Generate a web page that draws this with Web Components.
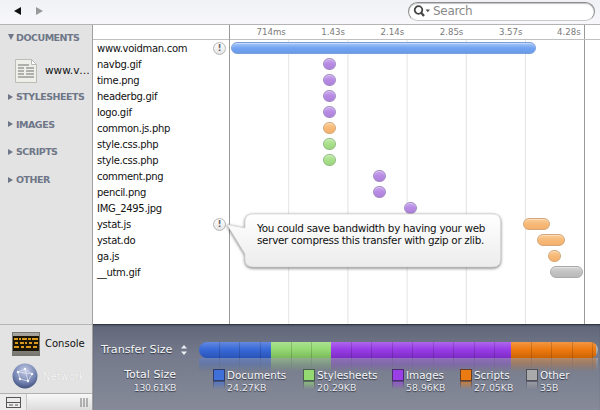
<!DOCTYPE html>
<html>
<head>
<meta charset="utf-8">
<title>Network</title>
<style>
html, body { margin: 0; padding: 0; height: 410px; overflow: hidden; background: #fff; font-family: "DejaVu Sans", sans-serif; }
</style>
</head>
<body>
<net-app></net-app>

<script>
// toolbar
class NetToolbar extends HTMLElement {
    constructor() {
        super();
        this.attachShadow({ mode: 'open' });
        this.shadowRoot.innerHTML = `
            <style>
                :host {
                    display: flex;
                    align-items: center;
                    height: 25px;
                    padding: 0 5px 0 14px;
                    box-sizing: border-box;
                    background: linear-gradient(#f0f1f5, #f8f8fb);
                    border-bottom: 1px solid #b4b4b4;
                }
                .arrow { width: 0; height: 0; border-top: 4px solid transparent; border-bottom: 4px solid transparent; }
                .back { border-right: 7px solid #111; margin-right: 15px; margin-bottom: 2px; }
                .next { border-left: 7px solid #999; margin-bottom: 2px; }
                .search {
                    margin-left: auto;
                    width: 187px;
                    height: 19px;
                    box-sizing: border-box;
                    margin-bottom: 2px;
                    border-radius: 10px;
                    border: 1px solid #8d8d8d;
                    border-bottom-color: #c9c9c9;
                    box-shadow: inset 0 1px 1px rgba(0,0,0,.25);
                    background: #fff;
                    display: flex;
                    align-items: center;
                    padding-left: 4px;
                    gap: 2px;
                    color: #8a8a8a;
                    font: 12px "DejaVu Sans", sans-serif;
                    letter-spacing: -.3px;
                }
                svg { display: block; }
            </style>
            <span class="arrow back"></span>
            <span class="arrow next"></span>
            <div class="search">
                <svg width="18" height="12" viewBox="0 0 18 12">
                    <circle cx="5.5" cy="5" r="3.8" fill="none" stroke="#444" stroke-width="1.8"/>
                    <path d="M8.2 7.8L11 11" stroke="#444" stroke-width="2.2"/>
                    <path d="M12.5 4.5h4.5l-2.2 2.8z" fill="#555"/>
                </svg>
                <span>Search</span>
            </div>
        `;
    }
}
customElements.define('net-toolbar', NetToolbar);

// sidebar group heading
class NetGroup extends HTMLElement {
    constructor() {
        super();
        this.attachShadow({ mode: 'open' });
        this.shadowRoot.innerHTML = `
            <style>
                :host {
                    display: flex;
                    align-items: center;
                    height: 14px;
                    padding-left: 8px;
                    gap: 3px;
                    color: #6e7688;
                    font: bold 9.5px "DejaVu Sans", sans-serif;
                    letter-spacing: -.5px;
                }
                .tri { width: 0; height: 0; border-top: 3px solid transparent; border-bottom: 3px solid transparent; border-left: 5px solid #6e7688; }
                :host([open]) .tri { border-left: 3.5px solid transparent; border-right: 3.5px solid transparent; border-top: 6px solid #6e7688; border-bottom: 0; margin-right: -1px; }
            </style>
            <span class="tri"></span><slot></slot>
        `;
    }
}
customElements.define('net-group', NetGroup);

// sidebar
class NetSidebar extends HTMLElement {
    constructor() {
        super();
        this.attachShadow({ mode: 'open' });
        this.shadowRoot.innerHTML = `
            <style>
                :host {
                    display: flex;
                    flex-direction: column;
                    background: #e3e3e3;
                    border-right: 1px solid #a0a0a0;
                    height: 385px;
                    box-sizing: border-box;
                    font: 10px "DejaVu Sans", sans-serif;
                    color: #111;
                }
                .groups { height: 299px; box-sizing: border-box; padding-top: 5px; }
                net-group { margin-bottom: 13.67px; }
                .doc { display: flex; align-items: center; height: 27px; margin: -1px 0 6px 15px; gap: 8px; font-size: 10.5px; }
                .tools { height: 69px; border-top: 1px solid #b6b6b6; box-sizing: border-box; padding-top: 6px; }
                .tool { display: flex; align-items: center; height: 30px; padding-left: 12px; gap: 5px; font-size: 10px; }
                .tool:first-child { height: 25px; margin-bottom: 5px; }
                .tool.on { color: #f6f6f6; text-shadow: 0 0 1px #bbb; }
                .foot { display: flex; height: 17px; border-top: 1px solid #b0b0b0; box-sizing: border-box; }
                .dock { width: 26px; display: flex; align-items: center; justify-content: center; border-right: 1px solid #c8c8c8; background: #ececec; }
                .grip { flex: 1; display: flex; justify-content: flex-end; align-items: center; padding-right: 4px; background: linear-gradient(#f8f8f8, #dcdcdc); }
                svg { display: block; flex: none; }
            </style>
            <div class="groups">
                <net-group open>DOCUMENTS</net-group>
                <div class="doc">
                    <svg width="22" height="27" viewBox="0 0 22 27">
                        <path d="M.5 2.5h16l5 5v18h-21z" fill="#efefea" stroke="#bdbdb8"/>
                        <path d="M16.5 2.5v5h5z" fill="#fff" stroke="#b8b8b8"/>
                        <path d="M3 8h11M3 11h6M11 11h8M3 14h6M11 14h8M3 17h6M11 17h8M3 20h16" stroke="#9a9a96" stroke-width="1.4"/>
                    </svg>
                    <span>www.v…</span>
                </div>
                <net-group>STYLESHEETS</net-group>
                <net-group>IMAGES</net-group>
                <net-group>SCRIPTS</net-group>
                <net-group>OTHER</net-group>
            </div>
            <div class="tools">
                <div class="tool">
                    <svg width="28" height="24" viewBox="0 0 28 24">
                        <defs>
                            <linearGradient id="c" x1="0" y1="0" x2="0" y2="1">
                                <stop offset="0" stop-color="#a9a8a3"/>
                                <stop offset="1" stop-color="#77756f"/>
                            </linearGradient>
                        </defs>
                        <rect x=".5" y=".5" width="27" height="23" fill="url(#c)" stroke="#77756f"/>
                        <rect x="1" y="4" width="26" height="15" fill="#1b1507"/>
                        <path d="M2 7h4M7 7h2M10 7h5M16 7h3M20 7h6M3 11h3M8 11h4M13 11h2M17 11h3M22 11h4M2 15h5M9 15h3M14 15h5M21 15h4" stroke="#d79a1e" stroke-width="2"/>
                    </svg>
                    <span>Console</span>
                </div>
                <div class="tool on">
                    <svg width="26" height="26" viewBox="0 0 26 26">
                        <defs>
                            <radialGradient id="g" cx=".5" cy=".3" r=".8">
                                <stop offset="0" stop-color="#c5cde6"/>
                                <stop offset=".6" stop-color="#6f7fae"/>
                                <stop offset="1" stop-color="#2d3a66"/>
                            </radialGradient>
                        </defs>
                        <circle cx="13" cy="13" r="12.5" fill="url(#g)"/>
                        <path d="M6 9L13 6L20 11L16 18L8 16ZM13 6L16 18M6 9L20 11" stroke="#e6eaf6" stroke-width=".7" fill="none"/>
                        <g fill="#f4f6ff"><circle cx="6" cy="9" r="1.2"/><circle cx="13" cy="6" r="1.2"/><circle cx="20" cy="11" r="1.2"/><circle cx="16" cy="18" r="1.2"/><circle cx="8" cy="16" r="1.2"/></g>
                    </svg>
                    <span>Network</span>
                </div>
            </div>
            <div class="foot">
                <div class="dock">
                    <svg width="15" height="11" viewBox="0 0 15 11">
                        <rect x=".5" y=".5" width="14" height="10" fill="none" stroke="#555"/>
                        <path d="M1 5.5h13M3 8h4M9 8h3" stroke="#555"/>
                    </svg>
                </div>
                <div class="grip">
                    <svg width="8" height="9" viewBox="0 0 8 9"><path d="M1 0v9M4 0v9M7 0v9" stroke="#777"/></svg>
                </div>
            </div>
        `;
    }
}
customElements.define('net-sidebar', NetSidebar);

// warning badge
class NetWarn extends HTMLElement {
    constructor() {
        super();
        this.attachShadow({ mode: 'open' });
        this.shadowRoot.innerHTML = `
            <style>
                :host {
                    display: flex;
                    align-items: center;
                    justify-content: center;
                    width: 13px;
                    height: 13px;
                    box-sizing: border-box;
                    border-radius: 50%;
                    border: 1px solid #b5b5b5;
                    background: linear-gradient(#fff, #e4e4e4);
                    color: #666;
                    font: bold 9px "DejaVu Sans", sans-serif;
                }
            </style>
            !
        `;
    }
}
customElements.define('net-warn', NetWarn);

// one resource name in the list
class NetName extends HTMLElement {
    constructor() {
        super();
        this.attachShadow({ mode: 'open' });
        this.shadowRoot.innerHTML = `
            <style>
                :host {
                    display: flex;
                    align-items: center;
                    justify-content: space-between;
                    height: 16px;
                    padding: 0 3px 0 4px;
                    font: 10px "DejaVu Sans", sans-serif;
                    letter-spacing: -.3px;
                    color: #111;
                }
            </style>
            <slot></slot><slot name="warn"></slot>
        `;
    }
}
customElements.define('net-name', NetName);

// one row of the waterfall
class NetBar extends HTMLElement {
    static get observedAttributes() { return ['at', 'w', 'kind']; }
    constructor() {
        super();
        this.attachShadow({ mode: 'open' });
        this.shadowRoot.innerHTML = `
            <style>
                :host { display: flex; align-items: center; height: 16px; }
                i {
                    display: block;
                    height: 12px;
                    box-sizing: border-box;
                    border-radius: 7px;
                    border: 1px solid var(--edge);
                    background: linear-gradient(var(--top), var(--mid) 50%, var(--low));
                    box-shadow: inset 0 1px 0 rgba(255,255,255,.35);
                }
                :host([kind=doc]) { --edge: #7b9fd8; --top: #a9c8f8; --mid: #73a4f2; --low: #6a9bea; }
                :host([kind=img]) { --edge: #a38cc4; --top: #c8a8ec; --mid: #b88ae4; --low: #ae82da; }
                :host([kind=js]) { --edge: #d3a878; --top: #fbcc98; --mid: #f7b977; --low: #f4b06c; }
                :host([kind=css]) { --edge: #92bb82; --top: #bfeaa6; --mid: #a8e08a; --low: #9cd67e; }
                :host([kind=other]) { --edge: #a8a8a8; --top: #d6d6d6; --mid: #c2c2c2; --low: #bababa; }
            </style>
            <i></i>
        `;
    }
    attributeChangedCallback() {
        const bar = this.shadowRoot.querySelector('i');
        bar.style.marginLeft = this.getAttribute('at') + 'px';
        bar.style.width = this.getAttribute('w') + 'px';
    }
}
customElements.define('net-bar', NetBar);

// time ruler and bars
class NetTimeline extends HTMLElement {
    constructor() {
        super();
        this.attachShadow({ mode: 'open' });
        this.shadowRoot.innerHTML = `
            <style>
                :host { display: block; min-width: 0; }
                .ruler {
                    display: flex;
                    height: 15px;
                    box-sizing: border-box;
                    border-bottom: 1px solid #c0c0c0;
                    font: 8.6px "DejaVu Sans", sans-serif;
                    color: #7a7a7a;
                }
                .ruler span {
                    width: 59.2px;
                    box-sizing: border-box;
                    flex: none;
                    text-align: right;
                    padding: 2px 3px 0 0;
                }
                .ruler .end { border-right: 1px solid #9a9a9a; }
                .ruler .first { width: 58.8px; }
                .waterfall {
                    height: 284px;
                    width: 355.4px;
                    box-sizing: border-box;
                    border-right: 1px solid #9a9a9a;
                    background-image: linear-gradient(90deg, transparent 58.2px, #e2e2e2 58.2px, #e2e2e2 59.2px);
                    background-size: 59.2px 100%;
                }
            </style>
            <div class="ruler">
                <span class="first">714ms</span><span>1.43s</span><span>2.14s</span><span>2.85s</span><span>3.57s</span><span class="end">4.28s</span>
            </div>
            <div class="waterfall"><slot></slot></div>
        `;
    }
}
customElements.define('net-timeline', NetTimeline);

// speech bubble over the waterfall
class NetBubble extends HTMLElement {
    constructor() {
        super();
        this.attachShadow({ mode: 'open' });
        this.shadowRoot.innerHTML = `
            <style>
                :host {
                    position: absolute;
                    left: 133px;
                    top: 188px;
                    width: 280px;
                    height: 62px;
                    font: 10.4px/12px "DejaVu Sans", sans-serif;
                    letter-spacing: -.3px;
                    color: #111;
                }
                svg { position: absolute; left: 0; top: 0; overflow: visible; filter: drop-shadow(0 1px 1.5px rgba(0,0,0,.55)); }
                p { position: relative; margin: 0; padding: 9px 0 0 31px; white-space: nowrap; }
            </style>
            <svg width="280" height="62" viewBox="0 0 280 62">
                <defs>
                    <linearGradient id="b" x1="0" y1="0" x2="0" y2="1">
                        <stop offset="0" stop-color="#fff"/>
                        <stop offset="1" stop-color="#ececec"/>
                    </linearGradient>
                </defs>
                <path d="M1 11.5L19 15V9Q19 1 27 1H267Q274.500 1 274.500 9V46Q274.500 54 267 54H27Q19 54 19 46V41Z" fill="url(#b)" stroke="#d8d8d8" stroke-width=".8"/>
            </svg>
            <p><slot></slot></p>
        `;
    }
}
customElements.define('net-bubble', NetBubble);

// legend entry
class NetLegend extends HTMLElement {
    constructor() {
        super();
        this.attachShadow({ mode: 'open' });
        this.shadowRoot.innerHTML = `
            <style>
                :host {
                    display: flex;
                    gap: 2px;
                    color: #f6f7f9;
                    font: 10.4px/12px "DejaVu Sans", sans-serif;
                    text-shadow: 0 1px 1px rgba(30,35,50,.8);
                }
                .swatch {
                    width: 12px;
                    height: 12px;
                    box-sizing: border-box;
                    border: 1px solid rgba(30,30,50,.65);
                    background: var(--c);
                    -webkit-box-reflect: below 0 linear-gradient(transparent 30%, rgba(0,0,0,.7));
                }
                .val { font-size: 9.4px; color: #e8eaef; margin-top: 1px; }
            </style>
            <span class="swatch"></span>
            <div><slot></slot><div class="val"><slot name="val"></slot></div></div>
        `;
    }
}
customElements.define('net-legend', NetLegend);

// transfer size panel
class NetSummary extends HTMLElement {
    constructor() {
        super();
        this.attachShadow({ mode: 'open' });
        const segs = `
            <b style="width:72px;--c:#2f62d6"></b>
            <b style="width:60px;--c:#90d86c"></b>
            <b style="width:180px;--c:#9333e6"></b>
            <b style="width:85px;--c:#ee7405"></b>
            <b style="width:2px;--c:#aaa"></b>
        `;
        this.shadowRoot.innerHTML = `
            <style>
                :host {
                    display: grid;
                    grid-template-columns: 106px 1fr;
                    grid-template-rows: 16px auto;
                    row-gap: 11px;
                    height: 86px;
                    box-sizing: border-box;
                    padding: 18px 2px 0 0;
                    background: linear-gradient(#5f6678, #747a8b 35%, #868a99);
                    box-shadow: inset 0 2px 2px -1px #23262f;
                    color: #f6f7f9;
                    font: 10.4px/12px "DejaVu Sans", sans-serif;
                }
                .mode {
                    display: flex;
                    align-items: center;
                    padding-left: 8px;
                    gap: 8px;
                    font-size: 11.2px;
                    text-shadow: 0 1px 1px rgba(30,35,50,.8);
                    white-space: nowrap;
                }
                .wrap { position: relative; }
                .bar {
                    position: relative;
                    display: flex;
                    height: 16px;
                    border-radius: 8px;
                    overflow: hidden;
                }
                .mirror {
                    position: absolute;
                    left: 0;
                    right: 0;
                    top: 16px;
                    display: flex;
                    height: 14px;
                    overflow: hidden;
                    opacity: .5;
                    -webkit-mask-image: linear-gradient(#000, transparent);
                    mask-image: linear-gradient(#000, transparent);
                }
                .bar b, .mirror b {
                    display: block;
                    flex: none;
                    background:
                        repeating-linear-gradient(90deg, transparent 0, transparent 19.5px, rgba(0,0,0,.16) 19.5px, rgba(0,0,0,.16) 20.5px),
                        linear-gradient(rgba(255,255,255,.25), rgba(255,255,255,.05) 45%, rgba(0,0,0,.14)),
                        var(--c);
                }
                .total {
                    text-align: right;
                    padding-right: 23px;
                    font-size: 11px;
                    text-shadow: 0 1px 1px rgba(30,35,50,.8);
                }
                .total div { font-size: 9.4px; color: #e8eaef; margin-top: 1px; letter-spacing: -.4px; }
                .legend { position: relative; display: flex; padding-left: 14px; }
                net-legend:nth-child(1) { width: 90px; --c: #3f6fd8; }
                net-legend:nth-child(2) { width: 89px; --c: #95d972; }
                net-legend:nth-child(3) { width: 68px; --c: #9a3fe6; }
                net-legend:nth-child(4) { width: 66px; --c: #ec7a12; }
                net-legend:nth-child(5) { --c: #aaa; }
                svg { display: block; }
            </style>
            <div class="mode">
                <span>Transfer Size</span>
                <svg width="6" height="10" viewBox="0 0 6 10"><path d="M3 0L6 3.500H0ZM3 10L6 6.500H0Z" fill="#eef0f4"/></svg>
            </div>
            <div class="wrap">
                <div class="mirror">${segs}</div>
                <div class="bar">${segs}</div>
            </div>
            <div class="total">Total Size<div>130.61KB</div></div>
            <div class="legend">
                <net-legend>Documents<span slot="val">24.27KB</span></net-legend>
                <net-legend>Stylesheets<span slot="val">20.29KB</span></net-legend>
                <net-legend>Images<span slot="val">58.96KB</span></net-legend>
                <net-legend>Scripts<span slot="val">27.05KB</span></net-legend>
                <net-legend>Other<span slot="val">35B</span></net-legend>
            </div>
        `;
    }
}
customElements.define('net-summary', NetSummary);

// whole window
class NetApp extends HTMLElement {
    constructor() {
        super();
        this.attachShadow({ mode: 'open' });
        const names = ['www.voidman.com', 'navbg.gif', 'time.png', 'headerbg.gif', 'logo.gif', 'common.js.php', 'style.css.php', 'style.css.php', 'comment.png', 'pencil.png', 'IMG_2495.jpg', 'ystat.js', 'ystat.do', 'ga.js', '__utm.gif'];
        const bars = [
            ['doc', 1, 305], ['img', 93, 13], ['img', 93, 13], ['img', 93, 13], ['img', 93, 13],
            ['js', 93, 13], ['css', 93, 13], ['css', 93, 13], ['img', 143, 13], ['img', 143, 13],
            ['img', 174, 13], ['js', 293, 27], ['js', 307, 28], ['js', 318, 13], ['other', 320, 33]
        ];
        const warned = [0, 11];
        this.shadowRoot.innerHTML = `
            <style>
                :host { display: block; width: 600px; height: 410px; overflow: hidden; }
                .body { display: grid; grid-template-columns: 93px 1fr; height: 385px; }
                .main { display: flex; flex-direction: column; min-width: 0; }
                .top { position: relative; display: grid; grid-template-columns: 137px 1fr; height: 299px; background: #fff; }
                .names { border-right: 1px solid #9a9a9a; box-sizing: border-box; }
                .head { height: 15px; box-sizing: border-box; border-bottom: 1px solid #c0c0c0; }
            </style>
            <net-toolbar></net-toolbar>
            <div class="body">
                <net-sidebar></net-sidebar>
                <div class="main">
                    <div class="top">
                        <div class="names">
                            <div class="head"></div>
                            ${names.map((n, i) => `<net-name>${n}${warned.includes(i) ? '<net-warn slot="warn"></net-warn>' : ''}</net-name>`).join('')}
                        </div>
                        <net-timeline>
                            ${bars.map(b => `<net-bar kind="${b[0]}" at="${b[1]}" w="${b[2]}"></net-bar>`).join('')}
                        </net-timeline>
                        <net-bubble>You could save bandwidth by having your web<br>server compress this transfer with gzip or zlib.</net-bubble>
                    </div>
                    <net-summary></net-summary>
                </div>
            </div>
        `;
    }
}
customElements.define('net-app', NetApp);
</script>
</body>
</html>
